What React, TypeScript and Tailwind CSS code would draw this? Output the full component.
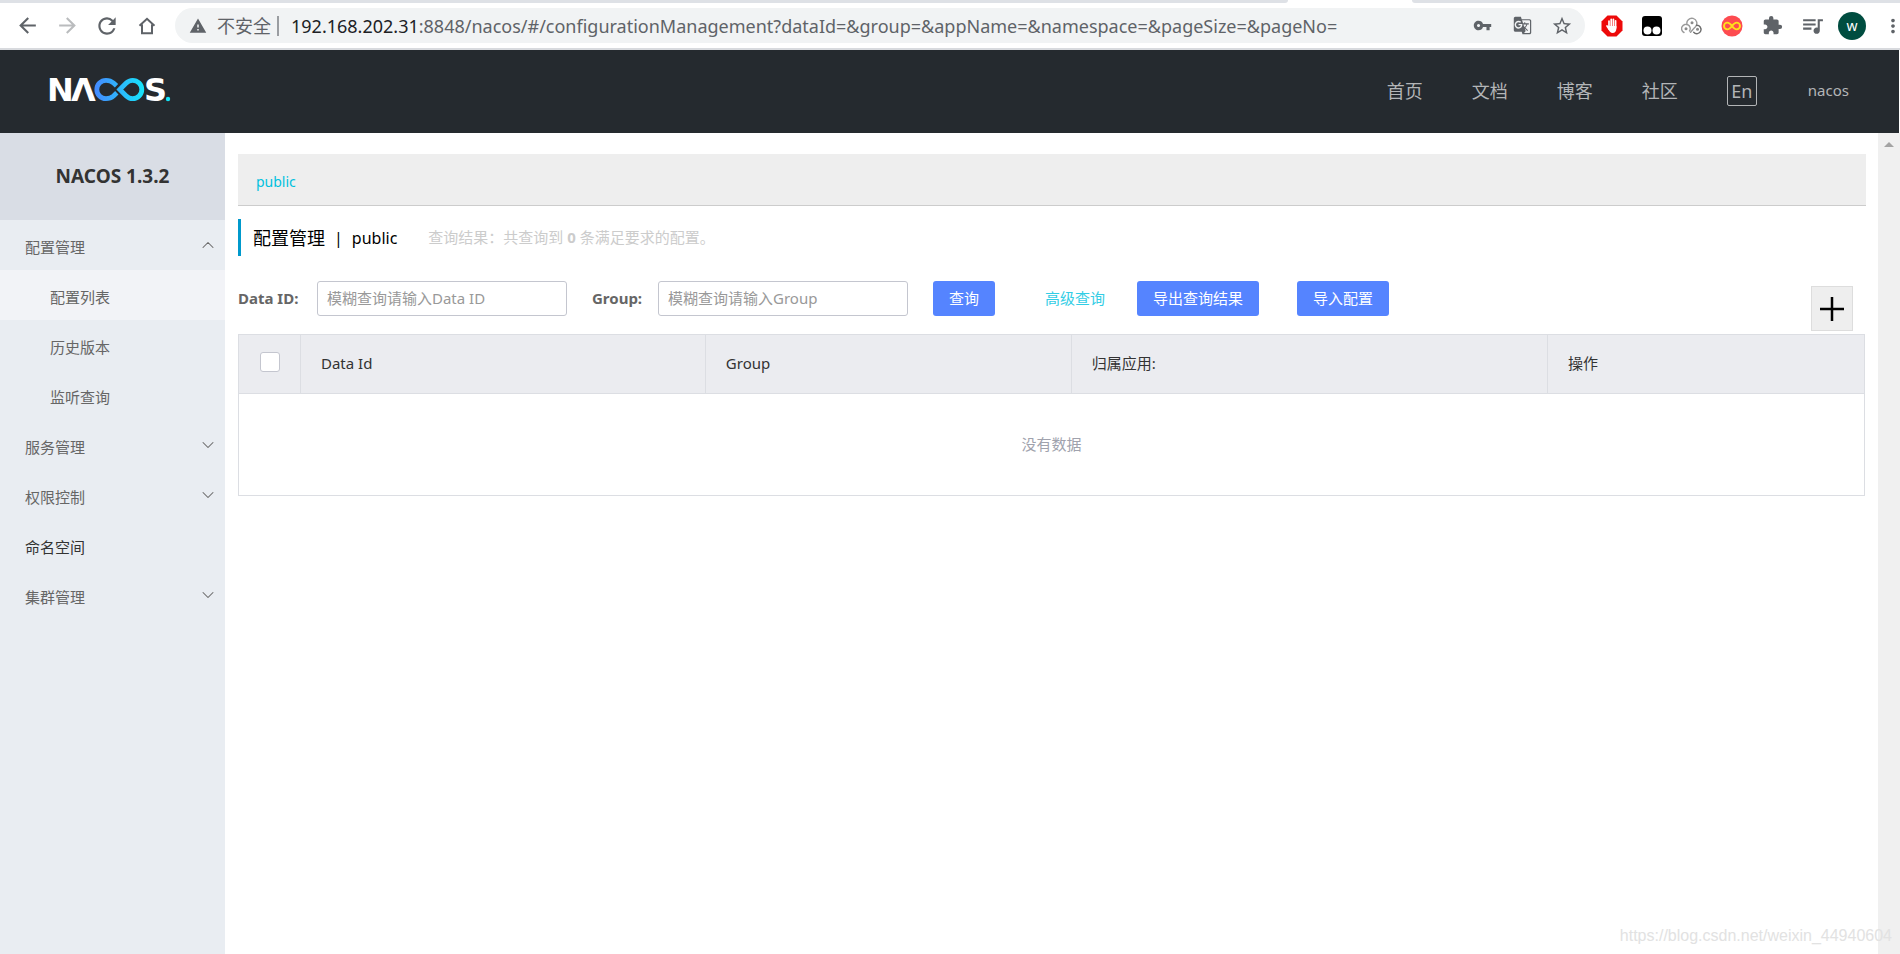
import { useState, type ReactNode } from 'react'
import { ChevronDown, ChevronUp } from 'lucide-react'
import {
  MdArrowBack,
  MdArrowForward,
  MdExtension,
  MdGTranslate,
  MdMoreVert,
  MdQueueMusic,
  MdRefresh,
  MdStarBorder,
  MdVpnKey,
  MdWarning,
} from 'react-icons/md'

type MenuItem = {
  title: string
  children?: string[]
  plain?: boolean
}

const menu: MenuItem[] = [
  { title: '配置管理', children: ['配置列表', '历史版本', '监听查询'] },
  { title: '服务管理', children: ['服务列表', '订阅者列表'] },
  { title: '权限控制', children: ['用户列表', '角色管理', '权限管理'] },
  { title: '命名空间', plain: true },
  { title: '集群管理', children: ['节点列表'] },
]

const navLinks = ['首页', '文档', '博客', '社区']

function BarButton({
  label,
  children,
}: {
  label: string
  children: ReactNode
}) {
  return (
    <button
      aria-label={label}
      className="flex h-9 w-10 shrink-0 items-center justify-center text-[#5f6368]"
    >
      {children}
    </button>
  )
}

function BlockerIcon() {
  return (
    <svg width="22" height="22" viewBox="0 0 22 22">
      <path d="M6.5 0.5h9l6 6v9l-6 6h-9l-6-6v-9z" fill="#ed0a0a" />
      <g stroke="#fff" strokeWidth="1.7" strokeLinecap="round" fill="none">
        <path d="M8 6v6M10.200 4.300v7M12.400 4.300v7M14.600 5.800v7" />
        <path d="M6 11l2.200 3.400" />
      </g>
      <path
        d="M7.200 11h8.200v2.500c0 2.600-1.500 4.600-3.800 4.600-2 0-3-1.200-4.400-4z"
        fill="#fff"
      />
    </svg>
  )
}

function MonkeyIcon() {
  return (
    <svg width="20" height="20" viewBox="0 0 20 20">
      <rect width="20" height="20" rx="3" fill="#000" />
      <circle cx="5.500" cy="14.500" r="4" fill="#fff" />
      <circle cx="14.500" cy="14.500" r="4" fill="#fff" />
    </svg>
  )
}

function CloudIcon() {
  return (
    <svg
      width="22"
      height="18"
      viewBox="0 0 22 18"
      fill="none"
      stroke="#9a9a9a"
      strokeWidth="1.400"
      strokeLinecap="round"
    >
      <path d="M3 15.500A4.300 4.300 0 1 1 8.500 14" />
      <path d="M6 7.500a5 5 0 1 1 8.500 2.200c-2 1.800-3.200 3.600-5 5.600" />
      <path d="M15.500 8.300a4.200 4.200 0 1 1-2.800 7" stroke="#6d6d6d" />
      <g fill="#8a8a8a" stroke="none">
        <circle cx="5" cy="11.800" r="1.500" />
        <circle cx="11" cy="5.800" r="1.500" />
        <circle cx="16.500" cy="12.300" r="1.500" />
      </g>
    </svg>
  )
}

function InfinityIcon() {
  return (
    <svg width="22" height="22" viewBox="0 0 22 22">
      <circle cx="11" cy="11" r="10.500" fill="#fd4b50" />
      <path
        d="M11 11C9.300 8.800 8.200 7.600 6.400 7.600a3.400 3.400 0 0 0 0 6.800C8.200 14.400 9.300 13.200 11 11s2.800-3.400 4.600-3.400a3.400 3.400 0 0 1 0 6.800C13.800 14.400 12.700 13.200 11 11z"
        fill="none"
        stroke="#ffe11a"
        strokeWidth="1.900"
      />
    </svg>
  )
}

function BrowserBar() {
  return (
    <div>
      <div className="flex h-[3px]">
        <div className="flex-1 rounded-br bg-[#dee1e6]" />
        <div className="w-[124px]" />
        <div className="w-[488px] rounded-bl bg-[#dee1e6]" />
      </div>
      <div className="flex h-[47px] items-center border-b-2 border-[#d8dade] pl-[7px]">
        <BarButton label="后退">
          <MdArrowBack size={25} />
        </BarButton>
        <button
          aria-label="前进"
          className="flex h-9 w-10 items-center justify-center text-[#babcbe]"
        >
          <MdArrowForward size={25} />
        </button>
        <BarButton label="刷新">
          <MdRefresh size={26} />
        </BarButton>
        <BarButton label="主页">
          <svg width="18" height="18" viewBox="0 0 18 18">
            <path
              d="M1.500 8.800L9 1.800l7.500 7M4 7.500v8.700h10V7.500"
              fill="none"
              stroke="#5f6368"
              strokeWidth="2"
            />
          </svg>
        </BarButton>
        <div className="ml-2 flex h-[35px] flex-1 items-center rounded-full bg-[#f1f3f4] pr-[3px] pl-[14px] text-lg leading-6">
          <MdWarning size={18} className="text-[#5f6368]" />
          <span className="ml-[10px] text-[#5f6368]">不安全</span>
          <span className="ml-[6px] h-5 w-[2px] bg-[#9a9da1]" />
          <p className="ml-3 flex-1 whitespace-nowrap text-[#5f6368]">
            <span className="text-[#202124]">192.168.202.31</span>
            :8848/nacos/#/configurationManagement?dataId=&amp;group=&amp;appName=&amp;namespace=&amp;pageSize=&amp;pageNo=
          </p>
          <BarButton label="密码">
            <MdVpnKey size={19} />
          </BarButton>
          <BarButton label="翻译">
            <MdGTranslate size={19} />
          </BarButton>
          <BarButton label="收藏">
            <MdStarBorder size={22} />
          </BarButton>
        </div>
        <div className="flex items-center pl-[7px]">
          <BarButton label="Blocker">
            <BlockerIcon />
          </BarButton>
          <BarButton label="Scripts">
            <MonkeyIcon />
          </BarButton>
          <BarButton label="Cloud">
            <CloudIcon />
          </BarButton>
          <BarButton label="Infinity">
            <InfinityIcon />
          </BarButton>
          <BarButton label="扩展程序">
            <MdExtension size={21} />
          </BarButton>
          <BarButton label="媒体">
            <MdQueueMusic size={25} />
          </BarButton>
          <BarButton label="用户">
            <span className="flex size-7 items-center justify-center rounded-full bg-[#004d40] text-sm text-white">
              w
            </span>
          </BarButton>
          <button
            aria-label="更多"
            className="flex h-9 w-7 items-center justify-end text-[#5f6368]"
          >
            <MdMoreVert size={22} className="-mr-1" />
          </button>
        </div>
      </div>
    </div>
  )
}

function Logo() {
  return (
    <svg
      width="128"
      height="45"
      viewBox="-5 -8 128 45"
      className="font-['DejaVu_Sans',sans-serif] text-[32px] font-bold"
    >
      <defs>
        <linearGradient
          id="loop"
          x1="44"
          x2="95"
          y1="0"
          y2="0"
          gradientUnits="userSpaceOnUse"
        >
          <stop offset="0" stopColor="#4688ff" />
          <stop offset="1" stopColor="#15e6fa" />
        </linearGradient>
      </defs>
      <g fill="#fff">
        <text x="-3" y="24">
          N
        </text>
        <text x="21" y="24">
          Λ
        </text>
        <text x="94" y="24">
          S
        </text>
      </g>
      <g fill="none" stroke="url(#loop)" strokeWidth="4.800">
        <path d="M66.500 8.800L63.500 6C61.500 4.200 59 3.300 56 3.300A9.200 9.200 0 0 0 56 21.700C59 21.700 61.500 20.800 63.500 19L66.800 15.800" />
        <path d="M69.800 12.500L76 6.300C78 4.300 80.200 3.300 82.600 3.300A9.200 9.200 0 0 1 82.600 21.700C80.200 21.700 78 20.700 76 18.700Z" />
      </g>
      <circle cx="118" cy="22" r="2.200" fill="#15e6fa" />
    </svg>
  )
}

function Header() {
  return (
    <header className="mr-px flex h-[83px] items-center justify-between bg-[#252a2f] pr-[50px] pl-[45px] text-[#b3b5b7]">
      <a href="#home" aria-label="NACOS">
        <Logo />
      </a>
      <nav className="flex items-center gap-[49px] pb-0.5 text-lg">
        {navLinks.map((link) => (
          <a href="#nav" key={link}>
            {link}
          </a>
        ))}
        <button className="flex size-[30px] items-center justify-center rounded-xs border border-[#b3b5b7] text-lg">
          En
        </button>
        <a href="#user" className="pl-0.5 text-[15px]">
          nacos
        </a>
      </nav>
    </header>
  )
}

function Sidebar() {
  const [opened, setOpened] = useState<string[]>(['配置管理'])

  const toggle = (title: string) =>
    setOpened(
      opened.includes(title)
        ? opened.filter((t) => t !== title)
        : [...opened, title],
    )

  return (
    <aside className="w-[225px] shrink-0 bg-[#e9edf2] text-[15px] text-[#666]">
      <h1 className="flex h-[87px] items-center justify-center bg-[#d9dde5] text-[19px] font-bold text-[#333]">
        NACOS 1.3.2
      </h1>
      <ul>
        {menu.map((item) => {
          const isOpen = opened.includes(item.title)
          return (
            <li key={item.title}>
              {item.plain ? (
                <a
                  href="#namespace"
                  className="flex h-[50px] items-center px-[25px] pt-1 text-[#333]"
                >
                  {item.title}
                </a>
              ) : (
                <button
                  onClick={() => toggle(item.title)}
                  className="flex h-[50px] w-full items-center justify-between pt-1 pr-[7px] pl-[25px]"
                >
                  {item.title}
                  {isOpen ? (
                    <ChevronUp size={20} strokeWidth={1.25} className="mb-1" />
                  ) : (
                    <ChevronDown size={20} strokeWidth={1.25} className="mb-1" />
                  )}
                </button>
              )}
              {isOpen && item.children
                ? item.children.map((child, i) => (
                    <a
                      href="#page"
                      key={child}
                      className={
                        i === 0
                          ? 'flex h-[50px] items-center bg-[#f2f3f7] pt-1 pl-[50px]'
                          : 'flex h-[50px] items-center pt-1 pl-[50px]'
                      }
                    >
                      {child}
                    </a>
                  ))
                : ''}
            </li>
          )
        })}
      </ul>
    </aside>
  )
}

function SearchForm() {
  return (
    <form
      className="mt-[25px] flex h-[35px] items-start text-[15px] leading-[35px]"
      onSubmit={(e) => e.preventDefault()}
    >
      <label htmlFor="dataId" className="w-[79px] font-bold text-[#666]">
        Data ID:
      </label>
      <input
        id="dataId"
        placeholder="模糊查询请输入Data ID"
        className="h-[35px] w-[250px] rounded-[3px] border border-[#c4c6cf] px-[9px] placeholder:text-[#999]"
      />
      <label htmlFor="group" className="ml-[25px] w-[66px] font-bold text-[#666]">
        Group:
      </label>
      <input
        id="group"
        placeholder="模糊查询请输入Group"
        className="h-[35px] w-[250px] rounded-[3px] border border-[#c4c6cf] px-[9px] placeholder:text-[#999]"
      />
      <button className="ml-[25px] h-[35px] rounded-[3px] bg-[#5584ff] px-4 text-white">
        查询
      </button>
      <a href="#advanced" className="ml-[50px] text-[#33cde5]">
        高级查询
      </a>
      <button
        type="button"
        className="ml-8 h-[35px] rounded-[3px] bg-[#5584ff] px-4 text-white"
      >
        导出查询结果
      </button>
      <button
        type="button"
        className="ml-[38px] h-[35px] rounded-[3px] bg-[#5584ff] px-4 text-white"
      >
        导入配置
      </button>
      <button
        type="button"
        aria-label="新建配置"
        className="mt-[5px] mr-[13px] ml-auto flex h-[45px] w-[42px] items-center justify-center border border-[#ddd] bg-[#eee]"
      >
        <svg width="26" height="26" viewBox="0 0 26 26">
          <path d="M13 1v24M1 13h24" stroke="#000" strokeWidth="2.500" />
        </svg>
      </button>
    </form>
  )
}

function ConfigTable() {
  return (
    <table className="w-full table-fixed border-collapse border border-[#dcdee3] text-[15px] text-[#333]">
      <thead>
        <tr className="h-[59px] bg-[#ebecf0] text-left">
          <th className="w-[62px] border border-[#dcdee3] pb-1">
            <input
              type="checkbox"
              aria-label="全选"
              className="mx-auto block size-5 appearance-none rounded-[3px] border border-[#c4c6cf] bg-white"
            />
          </th>
          <th className="w-[24.9%] border border-[#dcdee3] px-5 pb-0.5 font-normal">
            Data Id
          </th>
          <th className="w-[22.5%] border border-[#dcdee3] px-5 pb-0.5 font-normal">
            Group
          </th>
          <th className="w-[29.3%] border border-[#dcdee3] px-5 pb-0.5 font-normal">
            归属应用:
          </th>
          <th className="border border-[#dcdee3] px-5 pb-0.5 font-normal">
            操作
          </th>
        </tr>
      </thead>
      <tbody>
        <tr className="h-[102px]">
          <td colSpan={5} className="text-center text-[#a0a2ad]">
            没有数据
          </td>
        </tr>
      </tbody>
    </table>
  )
}

export default function App() {
  return (
    <div className="relative flex min-h-screen flex-col bg-white font-['Noto_Sans','Noto_Sans_CJK_SC',sans-serif]">
      <BrowserBar />
      <Header />
      <div className="flex flex-1">
        <Sidebar />
        <main className="min-w-0 flex-1 pt-[21px] pr-3 pl-[13px]">
          <div className="flex h-[52px] items-center border-b border-[#ccc] bg-[#eee] pt-1 pl-[18px] text-sm text-[#00c1de]">
            <a href="#public">public</a>
          </div>
          <div className="mt-[13px] flex h-[37px] items-center border-l-[3px] border-[#09c] pl-3">
            <h2 className="flex items-center gap-[9px] text-black">
              <span className="text-lg">配置管理</span>
              <span>|</span>
              <span>public</span>
            </h2>
            <p className="ml-[31px] text-[15px] text-[#ccc]">
              查询结果：共查询到 <b>0</b> 条满足要求的配置。
            </p>
          </div>
          <SearchForm />
          <div className="mt-[18px] mr-px">
            <ConfigTable />
          </div>
        </main>
        <div className="flex w-[22px] justify-center bg-[#f0f0f0] pt-[9px]">
          <svg width="10" height="5" viewBox="0 0 10 5">
            <path d="M5 0l5 5H0z" fill="#a3a3a3" />
          </svg>
        </div>
      </div>
      <p className="absolute right-2 bottom-1.5 font-['Liberation_Sans',sans-serif] text-base leading-6 text-[#e2e2e2]">
        https://blog.csdn.net/weixin_44940604
      </p>
    </div>
  )
}
